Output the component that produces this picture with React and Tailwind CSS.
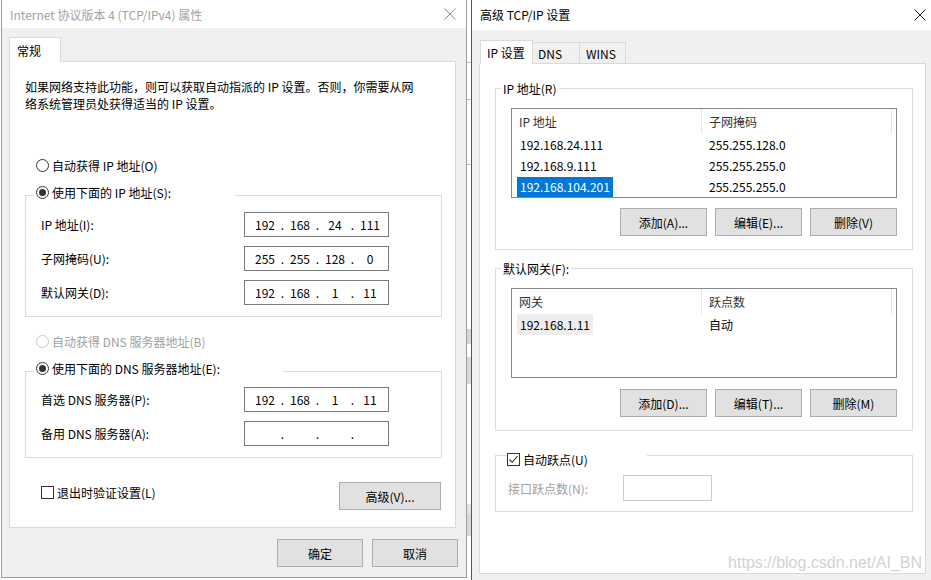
import React, { Fragment } from "react";

function CloseX({ color }) {
  return (
    <svg width="12" height="12" viewBox="0 0 12 12" className="shrink-0">
      <path d="M0.5 0.5 L11.5 11.5 M11.5 0.5 L0.5 11.5" stroke={color} strokeWidth="1" fill="none" />
    </svg>
  );
}

function Radio({ checked, disabled }) {
  return (
    <span
      className={
        disabled
          ? "w-[13px] h-[13px] rounded-full border border-[#cccccc] bg-white flex items-center justify-center shrink-0"
          : "w-[13px] h-[13px] rounded-full border border-[#333333] bg-white flex items-center justify-center shrink-0"
      }
    >
      {checked && <span className="w-[7px] h-[7px] rounded-full bg-[#333333]" />}
    </span>
  );
}

function Checkbox({ checked }) {
  return (
    <span className="w-[13px] h-[13px] border border-[#333333] bg-white flex items-center justify-center shrink-0">
      {checked && (
        <svg width="11" height="11" viewBox="0 0 11 11">
          <path d="M1.5 5.5 L4.2 8.3 L9.5 2.2" stroke="#333333" strokeWidth="1.1" fill="none" />
        </svg>
      )}
    </span>
  );
}

function IpInput({ parts }) {
  return (
    <div className="w-[145px] h-[25px] border border-[#7a7a7a] bg-white flex items-center pl-[6px] shrink-0">
      {parts.map((p, i) => (
        <Fragment key={i}>
          {i > 0 && <span className="w-[7px] text-center">.</span>}
          <span className="w-[28px] text-center">{p}</span>
        </Fragment>
      ))}
    </div>
  );
}

function Btn({ className, children }) {
  return (
    <div
      className={
        "h-[28px] border border-[#adadad] bg-[#e1e1e1] flex items-center justify-center shrink-0 " + className
      }
    >
      {children}
    </div>
  );
}

function IpRow({ label, parts, first }) {
  return (
    <div className={first ? "flex items-center h-[25px] pl-[15px] mt-[6px]" : "flex items-center h-[25px] pl-[15px] mt-[9px]"}>
      <span className="w-[203px] shrink-0">{label}</span>
      <IpInput parts={parts} />
    </div>
  );
}

function LeftDialog() {
  return (
    <div className="w-[466px] h-[578px] flex flex-col border-x border-b border-[#9b9b9b] shrink-0">
      <div className="h-[28px] bg-white flex items-center justify-between pl-[8px] pr-[10px] text-[#a3a3a3]">
        <span>Internet 协议版本 4 (TCP/IPv4) 属性</span>
        <CloseX color="#8c8c8c" />
      </div>
      <div className="flex-1 bg-[#f0f0f0] pl-[7px] pr-[8px] pt-[9px] flex flex-col">
        <div className="flex">
          <div className="relative z-10 w-[52px] h-[25px] bg-white border border-b-0 border-[#d9d9d9] pl-[7px] flex items-center">
            常规
          </div>
        </div>
        <div className="-mt-px w-[447px] h-[467px] bg-white border border-[#d9d9d9] pl-[15px] pt-[16px] flex flex-col">
          <p>
            如果网络支持此功能，则可以获取自动指派的 IP 设置。否则，你需要从网
            <br />
            络系统管理员处获得适当的 IP 设置。
          </p>

          <div className="flex items-center gap-[3px] pl-[11px] mt-[45px] h-[17px]">
            <Radio />
            <span>自动获得 IP 地址(O)</span>
          </div>

          <fieldset className="w-[417px] border border-[#dcdcdc] mt-[10px] pb-[11px]">
            <legend className="ml-[8px] w-[201px] pl-[2px] h-[22px]">
              <div className="flex items-center gap-[3px] h-[17px]">
                <Radio checked />
                <span>使用下面的 IP 地址(S):</span>
              </div>
            </legend>
            <IpRow first label="IP 地址(I):" parts={["192", "168", "24", "111"]} />
            <IpRow label="子网掩码(U):" parts={["255", "255", "128", "0"]} />
            <IpRow label="默认网关(D):" parts={["192", "168", "1", "11"]} />
          </fieldset>

          <div className="flex items-center gap-[3px] pl-[11px] mt-[16px] h-[17px] text-[#a0a0a0]">
            <Radio disabled />
            <span>自动获得 DNS 服务器地址(B)</span>
          </div>

          <fieldset className="w-[417px] border border-[#dcdcdc] mt-[10px] pb-[11px]">
            <legend className="ml-[8px] w-[249px] pl-[2px] h-[22px]">
              <div className="flex items-center gap-[3px] h-[17px]">
                <Radio checked />
                <span>使用下面的 DNS 服务器地址(E):</span>
              </div>
            </legend>
            <div className="flex items-center h-[25px] pl-[15px] mt-[5px]">
              <span className="w-[203px] shrink-0">首选 DNS 服务器(P):</span>
              <IpInput parts={["192", "168", "1", "11"]} />
            </div>
            <div className="flex items-center h-[25px] pl-[15px] mt-[9px]">
              <span className="w-[203px] shrink-0">备用 DNS 服务器(A):</span>
              <IpInput parts={["", "", "", ""]} />
            </div>
          </fieldset>

          <div className="w-[417px] flex items-start justify-between mt-[24px]">
            <div className="flex items-center gap-[3px] ml-[16px] mt-[2px] h-[17px]">
              <Checkbox />
              <span>退出时验证设置(L)</span>
            </div>
            <Btn className="w-[102px] mr-[1px]">高级(V)...</Btn>
          </div>
        </div>
        <div className="flex justify-end gap-[9px] mt-[11px]">
          <Btn className="w-[86px]">确定</Btn>
          <Btn className="w-[86px]">取消</Btn>
        </div>
      </div>
    </div>
  );
}

function ListHeader({ a, b }) {
  return (
    <div className="flex h-[25px] text-[#333333]">
      <div className="w-[190px] pl-[7px] border-r border-[#e5e5e5] flex items-center">{a}</div>
      <div className="w-[190px] pl-[7px] border-r border-[#e5e5e5] flex items-center">{b}</div>
    </div>
  );
}

function ListRow({ a, b, hl }) {
  return (
    <div className="flex h-[21px] items-center">
      <div className="w-[190px] pl-[5px] shrink-0">
        <span
          className={
            hl === "sel"
              ? "inline-block px-[3px] leading-[20px] bg-[#0078d7] text-white"
              : hl === "soft"
              ? "inline-block px-[3px] leading-[21px] bg-[#eeeeee]"
              : "inline-block px-[3px] leading-[20px]"
          }
        >
          {a}
        </span>
      </div>
      <div className="pl-[7px]">{b}</div>
    </div>
  );
}

function BgStrip() {
  return (
    <div className="w-[4px] h-[580px] bg-white flex flex-col shrink-0">
      <div className="h-[62px]" />
      <div className="h-[1px] bg-[#c4c4c4]" />
      <div className="h-[36px]" />
      <div className="h-[1px] bg-[#c4c4c4]" />
      <div className="h-[64px]" />
      <div className="h-[1px] bg-[#c4c4c4]" />
      <div className="h-[164px]" />
      <div className="h-[15px] bg-[#d6d6d6]" />
      <div className="h-[13px]" />
      <div className="h-[27px] bg-[#d9d9d9]" />
      <div className="h-[120px]" />
      <div className="h-[10px] bg-[#e3e3e3]" />
      <div className="h-[22px] bg-[#d9d9d9]" />
    </div>
  );
}

function RightDialog() {
  return (
    <div className="w-[460px] h-[580px] flex flex-col border-l border-[#595959] shrink-0">
      <div className="h-[30px] bg-white flex items-center justify-between pl-[8px] pr-[5px] pb-[1px] text-black">
        <span>高级 TCP/IP 设置</span>
        <CloseX color="#222222" />
      </div>
      <div className="flex-1 bg-[#f0f0f0] pl-[7px] pt-[10px] flex flex-col">
        <div className="flex items-end ml-[1px]">
          <div className="relative z-10 h-[24px] w-[53px] bg-white border border-b-0 border-[#d9d9d9] pl-[6px] flex items-center">
            IP 设置
          </div>
          <div className="h-[22px] w-[47px] border border-l-0 border-b-0 border-[#d9d9d9] pl-[5px] flex items-center">
            DNS
          </div>
          <div className="h-[22px] w-[46px] border border-l-0 border-b-0 border-[#d9d9d9] pl-[6px] flex items-center">
            WINS
          </div>
        </div>
        <div className="-mt-px relative w-[447px] h-[511px] bg-white border border-[#d9d9d9] pl-[15px] flex flex-col">
          <fieldset className="w-[418px] border border-[#dcdcdc] mt-[16px] pb-[13px]">
            <legend className="ml-[5px] px-[2px] h-[17px]">IP 地址(R)</legend>
            <div className="ml-[15px] mt-[11px] w-[386px] h-[90px] border border-[#828790] bg-white">
              <ListHeader a="IP 地址" b="子网掩码" />
              <ListRow a="192.168.24.111" b="255.255.128.0" />
              <ListRow a="192.168.9.111" b="255.255.255.0" />
              <ListRow a="192.168.104.201" b="255.255.255.0" hl="sel" />
            </div>
            <div className="flex justify-end gap-[8px] mt-[10px] w-[401px]">
              <Btn className="w-[87px]">添加(A)...</Btn>
              <Btn className="w-[87px]">编辑(E)...</Btn>
              <Btn className="w-[87px]">删除(V)</Btn>
            </div>
          </fieldset>

          <fieldset className="w-[418px] border border-[#dcdcdc] mt-[10px] pb-[13px]">
            <legend className="ml-[5px] px-[2px] h-[17px]">默认网关(F):</legend>
            <div className="ml-[15px] mt-[11px] w-[386px] h-[90px] border border-[#828790] bg-white">
              <ListHeader a="网关" b="跃点数" />
              <ListRow a="192.168.1.11" b="自动" hl="soft" />
            </div>
            <div className="flex justify-end gap-[8px] mt-[11px] w-[401px]">
              <Btn className="w-[87px]">添加(D)...</Btn>
              <Btn className="w-[87px]">编辑(T)...</Btn>
              <Btn className="w-[87px]">删除(M)</Btn>
            </div>
          </fieldset>

          <fieldset className="w-[418px] border border-[#dcdcdc] mt-[12px] pb-[10px]">
            <legend className="ml-[11px] w-[140px] pt-[8px] h-[25px]">
              <div className="flex items-center gap-[3px] h-[17px]">
                <Checkbox checked />
                <span>自动跃点(U)</span>
              </div>
            </legend>
            <div className="flex items-center h-[26px] mt-[7px] pl-[12px]">
              <span className="w-[115px] shrink-0 text-[#a0a0a0]">接口跃点数(N):</span>
              <div className="w-[89px] h-[26px] border border-[#cccccc] bg-white" />
            </div>
          </fieldset>

          <div className="absolute right-[3px] bottom-[1px] text-[16px] leading-[18px] text-[#d2d2d2] [font-family:'Liberation_Sans',sans-serif]">
            https://blog.csdn.net/AI_BN
          </div>
        </div>
      </div>
    </div>
  );
}

export default function App() {
  return (
    <div className="w-[931px] h-[580px] overflow-hidden flex bg-white text-[12px] leading-[17px] text-black [font-family:'Noto_Sans_CJK_SC',sans-serif]">
      <div className="w-[1px] h-[580px] bg-white shrink-0" />
      <LeftDialog />
      <BgStrip />
      <RightDialog />
    </div>
  );
}
